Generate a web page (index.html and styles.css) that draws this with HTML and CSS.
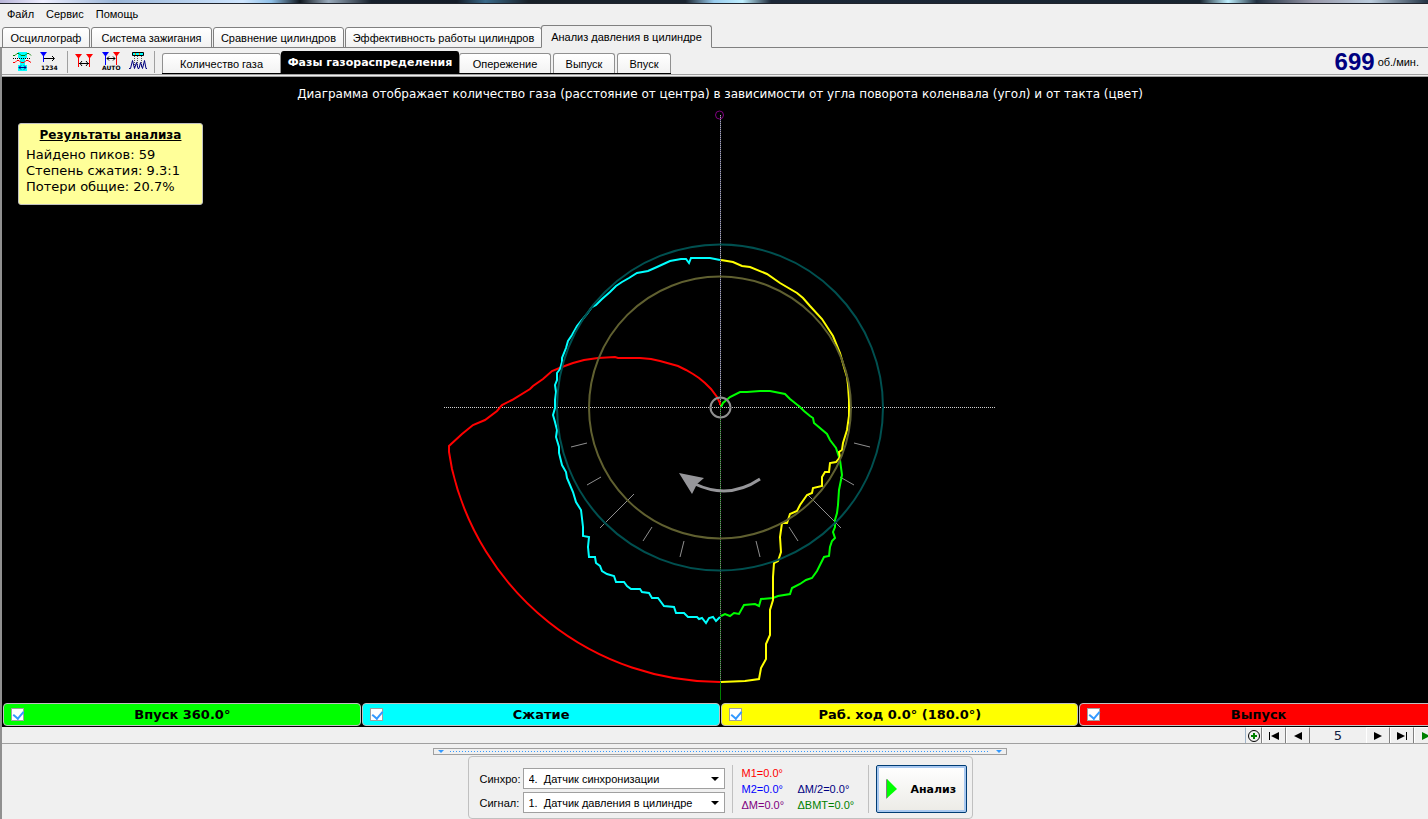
FILE: index.html
```html
<!DOCTYPE html>
<html lang="ru">
<head>
<meta charset="utf-8">
<title>Анализ давления в цилиндре</title>
<link rel="stylesheet" href="styles.css">
</head>
<body>
<div class="window">
  <div class="glass"></div>
  <nav class="menu">
    <button>Файл</button><button>Сервис</button><button>Помощь</button>
  </nav>
  <div class="tabs" role="tablist">
    <button class="tab t-osc" role="tab">Осциллограф</button>
    <button class="tab t-ign" role="tab">Система зажигания</button>
    <button class="tab t-cmp" role="tab">Сравнение цилиндров</button>
    <button class="tab t-eff" role="tab">Эффективность работы цилиндров</button>
    <button class="tab t-prs selected" role="tab" aria-selected="true">Анализ давления в цилиндре</button>
  </div>
  <main class="work">
    <div class="toolbar">
      <div class="tools">
        <button aria-label="Синхронизация"><svg viewBox="0 0 20 20" width="20" height="20">
          <path fill="#0ff" d="M6 0h9v6h-2v7h2v6H6v-6h2V6H6z"/>
          <path fill="none" stroke="#008000" d="M1 3.500h2l2-2h2l2 2h4l2-2h2l2 2"/>
          <path fill="none" stroke="#000" stroke-dasharray="1 1" d="M1 6.500h18"/>
          <path fill="none" stroke="#f00" d="M1 10.500h2l2-2h2l2 2h3l2-2h2l3 2"/>
          <path fill="none" stroke="#000080" d="M7 15.500h7M9 13.500l-2 2 2 2M12 13.500l2 2-2 2"/>
        </svg></button>
        <button aria-label="Номера"><svg viewBox="0 0 20 20" width="20" height="20">
          <path fill="#00f" d="M1 0h7L5 4v6H4V4z"/>
          <path stroke="#000" fill="none" d="M5 6.500h10M13 4l2.500 2.500L13 9"/>
          <text class="icon-text" x="2" y="18">1234</text>
        </svg></button>
        <i class="sep"></i>
        <button aria-label="Маркеры"><svg viewBox="0 0 20 20" width="20" height="20">
          <path fill="#f00" d="M1 2h7L5 6v9H4V6zM12 2h7l-3 4v9h-1V6z"/>
          <path stroke="#000" fill="none" d="M5 11.500h10M8 9l-2 2.500L8 14M12 9l2 2.500-2 2.500"/>
        </svg></button>
        <button aria-label="Автомаркеры"><svg viewBox="0 0 20 20" width="20" height="20">
          <path fill="#00f" d="M1 0h7L5 4v9H4V4z"/><path fill="#f00" d="M12 0h7l-3 4v9h-1V4z"/>
          <path stroke="#000" fill="none" d="M6 6.500h8M8 4.500l-2 2 2 2M12 4.500l2 2-2 2"/>
          <text class="icon-text" x="1" y="18">AUTO</text>
        </svg></button>
        <button aria-label="Пики"><svg viewBox="0 0 20 20" width="20" height="20">
          <path fill="#0ff" stroke="#000" d="M4.500 .5h11v3h-11z"/><path fill="#f80" d="M7 1h1v2H7zM11 1h1v2h-1z"/>
          <path stroke="#555" stroke-dasharray="1 1" d="M6.500 4v11M9.500 4v11M13.500 4v11"/>
          <path stroke="#000080" fill="none" d="M1 16.500h1.500l2-8 2 8 2-6 1.500 6h1l1.500-6 2 6 2-8 1.500 8H19"/>
        </svg></button>
        <i class="sep last"></i>
      </div>
      <div class="subtabs" role="tablist">
        <button class="sub s-gas" role="tab">Количество газа</button>
        <button class="sub s-phase active" role="tab" aria-selected="true">Фазы газораспределения</button>
        <button class="sub s-adv" role="tab">Опережение</button>
        <button class="sub s-out" role="tab">Выпуск</button>
        <button class="sub s-in" role="tab">Впуск</button>
      </div>
      <div class="rpm"><b>699</b><span>об./мин.</span></div>
    </div>
    <section class="chart">
      <svg class="plot" viewBox="2 77 1436 626">
        <g shape-rendering="crispEdges">
          <path class="axis" d="M444 407.500H996"/>
          <path class="cursor-blue" d="M720.500 115V407"/>
          <path class="cursor-white" d="M720.500 115V407"/>
          <path class="cursor-green" d="M720.500 407V700"/>
          <path class="cursor-purple" d="M720.500 407V682"/>
        </g>
        <path class="tick" d="M571 447l16-4M587 485l14-8M600 528l34-34M643 541l9-14M680 557l4-16M854 443l16 4M840 477l14 8M807 494l34 34M789 527l9 14M756 541l4 16"/>
        <g class="curve">
          <path stroke="#f00" d="M720 405L720 403 717 397 711 389 705 383 699 378 693 374 686 370 678 366 660 361 651 359 640 358 618 358 615 357 598 358 584 360 573 363 562 367 552 371 543 379 533 386 530 389 512 400 502 405 497 411 485 420 473 425 462 434 449 446 449 452 452 469A275 275 0 0 0 720 682"/>
          <path stroke="#0ff" d="M720 260L710 258 691 258 689 263 686 259 681 259 670 261 657 267 648 271 637 273 629 278 622 282 616 286 610 292 602 299 596 305 592 307 587 314 582 320 577 326 572 335 568 341 566 348 562 358 562 362 560 369 557 373 557 380 555 385 556 392 555 400 555 408 553 415 555 422 557 430 556 437 559 447 559 453 562 465 566 472 567 478 573 492 576 502 581 510 583 527 583 536 589 537 588 547 589 557 595 557 596 563 600 566 602 571 607 574 614 576 616 582 624 582 627 586 631 589 640 589 642 592 649 593 652 598 658 598 664 606 674 607 676 613 684 613 688 617 697 617 699 619 702 618 706 623 709 618 713 617 716 621 720 617"/>
          <path stroke="#0f0" d="M721 407L723 403 730 397 740 392 747 392 760 391 770 391 785 394 790 399 800 407 804 411 810 416 813 418 814 423 827 434 830 440 836 448 840 460 842 475 839 490 838 505 837 513 835 520 835 527 833 532 835 538 832 541 830 547 829 556 824 557 817 571 812 578 806 580 800 584 792 588 790 594 778 596 773 598 761 599 759 606 755 604 744 605 739 614 734 613 730 616 725 614 721 616"/>
          <path stroke="#ff0" d="M721 260L733 262 742 266 750 267 767 274 780 283 797 293 803 298 810 306 822 319 833 336 840 353 844 367 847 377 848 385 849 400 849 416 847 430 843 443 842 450 839 452 840 457 836 462 830 463 829 472 825 472 822 477 822 486 813 488 812 493 807 495 800 505 797 511 790 514 787 523 782 523 780 537 781 552 778 561 774 563 773 577 773 600 770 610 770 635 766 644 766 659 761 668 759 679 745 681 721 682"/>
          <circle stroke="#005050" cx="720" cy="407.500" r="163"/>
          <circle stroke="#606030" cx="720" cy="407.500" r="131"/>
        </g>
        <circle fill="none" stroke="#909090" stroke-width="2" cx="720.500" cy="407.500" r="10"/>
        <circle fill="none" stroke="#800080" cx="719.500" cy="115" r="4"/>
        <path fill="none" stroke="#96969a" stroke-width="3" d="M760 479Q729 500 695 484"/>
        <path fill="#96969a" d="M679 473L704 478 697 484 692 494z"/>
      </svg>
      <h1>Диаграмма отображает количество газа (расстояние от центра) в зависимости от угла поворота коленвала (угол) и от такта (цвет)</h1>
      <aside class="results">
        <h2>Результаты анализа</h2>
        <p>Найдено пиков: 59</p>
        <p>Степень сжатия: 9.3:1</p>
        <p>Потери общие: 20.7%</p>
      </aside>
    </section>
    <div class="legend">
      <label class="green"><input type="checkbox" checked><span>Впуск 360.0°</span></label>
      <label class="cyan"><input type="checkbox" checked><span>Сжатие</span></label>
      <label class="yellow"><input type="checkbox" checked><span>Раб. ход 0.0° (180.0°)</span></label>
      <label class="red"><input type="checkbox" checked><span>Выпуск</span></label>
    </div>
    <div class="pager">
      <button class="plus" aria-label="Добавить"><svg viewBox="0 0 14 14" width="14" height="14"><circle cx="7" cy="7" r="5.500" fill="none" stroke="#000"/><path stroke="#008000" stroke-width="2" d="M7 4v6M4 7h6"/></svg></button>
      <button aria-label="Первый"><svg viewBox="0 0 12 8" width="12" height="8"><path d="M1 0h1v8H1zM11 0v8L3 4z"/></svg></button>
      <button aria-label="Назад"><svg viewBox="0 0 12 8" width="12" height="8"><path d="M10 0v8L2 4z"/></svg></button>
      <output>5</output>
      <button aria-label="Вперёд"><svg viewBox="0 0 12 8" width="12" height="8"><path d="M2 0v8l8-4z"/></svg></button>
      <button aria-label="Последний"><svg viewBox="0 0 12 8" width="12" height="8"><path d="M1 0v8l8-4zM10 0h1v8h-1z"/></svg></button>
      <button aria-label="Пуск"><svg viewBox="0 0 12 8" width="12" height="8"><path fill="#008000" d="M2 0v8l8-4z"/></svg></button>
    </div>
    <div class="splitter"><i></i><span></span><i></i></div>
    <form class="panel">
      <div class="sources">
        <label for="sync">Синхро:</label>
        <div class="combo"><select id="sync"><option>4.&nbsp;&nbsp;Датчик синхронизации</option></select></div>
        <label for="signal">Сигнал:</label>
        <div class="combo"><select id="signal"><option>1.&nbsp;&nbsp;Датчик давления в цилиндре</option></select></div>
      </div>
      <div class="marks">
        <span class="m1">M1=0.0°</span><span></span>
        <span class="m2">M2=0.0°</span><span class="half">ΔM/2=0.0°</span>
        <span class="dm">ΔM=0.0°</span><span class="bmt">ΔBMT=0.0°</span>
      </div>
      <button type="button" class="analyze"><svg viewBox="0 0 11 20" width="11" height="20"><path fill="#808080" d="M0 0v20l2-2V1z"/><path fill="#0f0" d="M1 0v19l10-9z"/></svg><span>Анализ</span></button>
    </form>
  </main>
</div>
</body>
</html>
```
FILE: styles.css
```css
* { box-sizing: border-box; }
body { margin: 0; background: #f0f0f0; color: #000; font: 12px/14px "Liberation Sans", Arial, sans-serif; overflow: hidden; }
button { font: inherit; color: inherit; margin: 0; padding: 0; border: 0; background: none; }
h1, h2, p { margin: 0; }
svg { display: block; }
.window { display: flex; flex-direction: column; min-height: 100vh; overflow: hidden; }

.glass { height: 4px; border-bottom: 1px solid #20242c; background: linear-gradient(90deg, #b8b4d8 0, #eef 3%, #9bb6d8 8%, #cfe6ff 17%, #8fc0e8 19%, #101820 21%, #9ab 23%, #16202c 26%, #141c28 32%, #3a6a8a 34%, #182028 37%, #1a2430 48%, #9ce 50%, #bfefff 52%, #1c2838 54%, #182430 84%, #bff0ff 86%, #203040 88%, #99a 92%, #bcd 96%, #234 100%); }

.menu { display: flex; gap: 12px; height: 21px; padding: 0 7px; font-size: 11px; }
.menu button { height: 20px; }

.tabs { display: flex; align-items: flex-end; gap: 1px; height: 23px; padding-left: 2px; font-size: 11px; background: linear-gradient(#808080, #808080) left bottom / 100% 1px no-repeat; }
.tab { height: 21px; border: 1px solid #808080; border-radius: 3px 3px 0 0; background: linear-gradient(#fff, #f2f2f2); white-space: nowrap; }
.tab.selected { height: 23px; margin-left: -2px; border-bottom-color: #f0f0f0; background: #f0f0f0; }
.t-osc { width: 88px; }
.t-ign { width: 121px; }
.t-cmp { width: 131px; }
.t-eff { width: 197px; }
.t-prs { width: 171px; }

.work { display: flex; flex-direction: column; margin-right: -10px; border-left: 2px solid #909090; }
.toolbar { display: flex; height: 29px; padding-right: 19px; border-bottom: 3px double #a0a0a0; }
.tools { display: flex; align-items: center; height: 26px; padding: 2px 0 0 10px; gap: 7px; }
.sep { width: 1px; height: 22px; margin: 0 -1px 0 1px; background: #a0a0a0; }
.sep.last { margin: 0 7px 0 -1px; }
.icon-text { font: bold 6px "DejaVu Sans", sans-serif; }
.subtabs { display: flex; align-items: flex-end; gap: 2px; height: 26px; border-bottom: 1px solid #000; font-size: 11px; }
.sub { height: 20px; border: 1px solid #909090; border-bottom: 0; border-radius: 3px 3px 0 0; background: linear-gradient(#fff, #f2f2f2); white-space: nowrap; }
.sub.active { height: 22px; margin: 0 -2px; border-color: #000; background: #000; color: #fff; font: bold 11px "DejaVu Sans", sans-serif; }
.s-gas { width: 119px; }
.s-phase { width: 178px; }
.s-adv { width: 92px; }
.s-out { width: 62px; }
.s-in { width: 54px; }
.rpm { display: flex; align-items: center; gap: 3px; margin-left: auto; height: 26px; padding-top: 1px; font-size: 11px; }
.rpm b { color: #000080; font-size: 24px; }

.chart { position: relative; display: grid; background: #000; color: #fff; font-family: "DejaVu Sans", Verdana, sans-serif; }
.chart > * { grid-area: 1 / 1; }
.plot { width: 100%; height: auto; }
.chart h1 { padding-top: 9px; font-size: 12px; line-height: 16px; font-weight: normal; text-align: center; white-space: nowrap; }
.results { position: absolute; left: 16px; top: 46px; min-width: 185px; padding: 3px 7px 9px; border: 1px solid #c0c0c0; border-radius: 3px; background: #ffff99; color: #000; font-size: 13px; line-height: 16px; }
.results h2 { margin-bottom: 4px; font-size: 12px; line-height: 16px; text-align: center; text-decoration: underline; }
.axis { stroke: #d0d0d0; stroke-dasharray: 1 1; }
.cursor-blue { stroke: #404070; }
.cursor-white { stroke: #b0b0a8; stroke-dasharray: 1 1; }
.cursor-green { stroke: #008000; }
.cursor-purple { stroke: #906090; stroke-dasharray: 1 1; }
.tick { stroke: #909090; fill: none; }
.curve { fill: none; stroke-width: 2; }

.legend { display: grid; grid-template-columns: repeat(4, 1fr); height: 24px; padding-left: 1px; background: #000; border-bottom: 1px solid #000; font: bold 13px "DejaVu Sans", Verdana, sans-serif; }
.legend label { display: flex; align-items: center; margin-right: 1px; padding: 0 7px; border: 1px solid #c0c0c0; border-radius: 4px; }
.legend span { flex: 1; text-align: center; padding-right: 12px; }
.legend input { appearance: none; width: 13px; height: 13px; margin: 0; border: 1px solid #a0a0a0; background: #fff; }
.legend input:checked::after { content: ""; display: block; width: 5px; height: 8px; margin: 0 0 0 3px; border: solid #3399ff; border-width: 0 2px 2px 0; transform: rotate(40deg); }
.green { background: #0f0; }
.cyan { background: #0ff; }
.yellow { background: #ff0; }
.red { background: #f00; }

.pager { display: flex; justify-content: flex-end; height: 17px; border-bottom: 1px solid #a0a0a0; }
.pager button { display: grid; place-items: center; width: 24px; border: solid; border-width: 1px 1px 0; border-color: #fff #808080 #808080 #fff; }
.pager .plus { width: 17px; border-left-color: #a0b4c8; }
.pager output { width: 56px; text-align: center; font: 13px/18px "DejaVu Sans", sans-serif; color: #102040; }

.splitter { display: flex; align-items: center; align-self: center; gap: 6px; width: 40%; height: 7px; margin-top: 4px; padding: 0 4px; border: 1px solid #a0a0a0; }
.splitter i { border: 3px solid transparent; border-top-color: #3399ff; border-bottom: 0; }
.splitter span { flex: 1; height: 1px; background: repeating-linear-gradient(90deg, #3399ff 0 1px, transparent 1px 3px); }

.panel { display: flex; align-items: flex-end; align-self: center; margin-top: 1px; padding: 8px 5px 5px 11px; border: 1px solid #c0c0c0; border-radius: 4px; }
.sources { display: grid; grid-template-columns: 43px 202px; row-gap: 3px; align-items: center; font-size: 11px; }
.combo { position: relative; }
.combo::after { content: ""; position: absolute; right: 6px; top: 9px; border: 4px solid transparent; border-top-color: #000; border-bottom: 0; }
.combo select { display: block; appearance: none; width: 100%; height: 21px; margin: 0; padding: 0 5px; border: 1px solid #a0a0a0; border-radius: 0; background: #fff; color: #000; font: 11px "Liberation Sans", Arial, sans-serif; }
.marks { display: grid; grid-template-columns: 56px 70px; font-size: 11px; line-height: 16px; margin-left: 7px; padding-left: 9px; border: solid #c0c0c0; border-width: 0 1px; }
.m1 { color: #f00; }
.m2 { color: #00f; }
.half { color: #000080; }
.dm { color: #800080; }
.bmt { color: #008000; }
.analyze { display: flex; align-items: center; gap: 14px; width: 91px; height: 48px; margin-left: 7px; padding-left: 9px; border: 1px solid #003c74; border-radius: 2px; background: linear-gradient(#fff, #ecebe6); box-shadow: inset 0 0 0 2px #a8c8f0; font: bold 11px "DejaVu Sans", sans-serif; }
```
